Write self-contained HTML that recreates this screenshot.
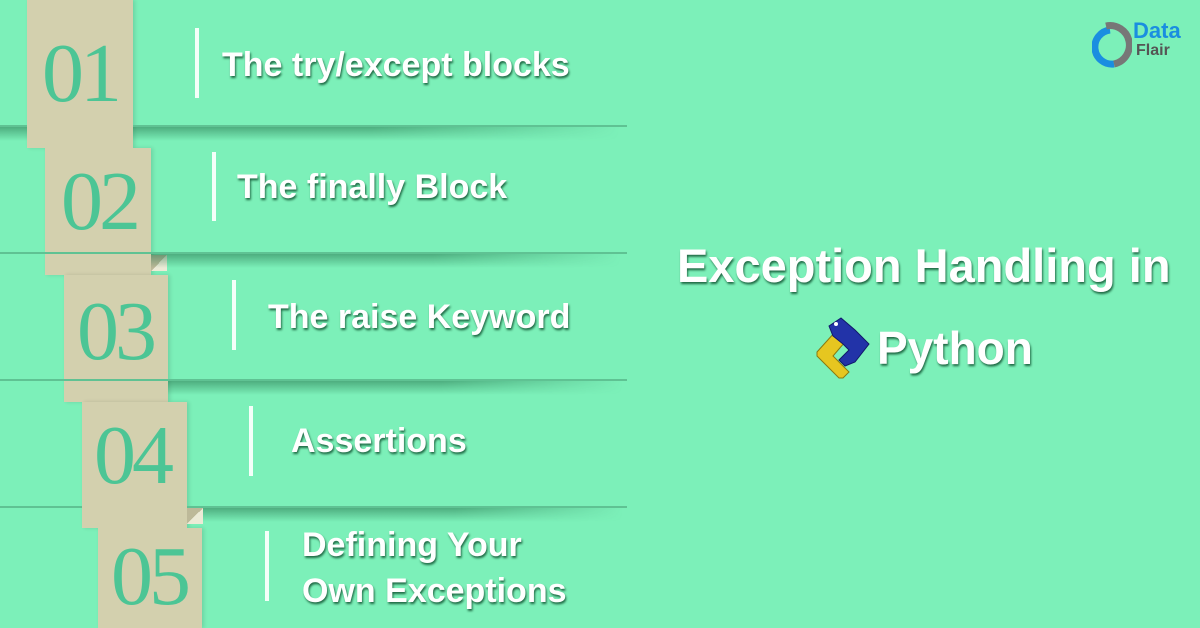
<!DOCTYPE html>
<html><head><style>
body{margin:0;width:1200px;height:628px;background:#7cf0b9;position:relative;overflow:hidden;font-family:"Liberation Sans",sans-serif}
.ln{position:absolute;left:0;width:627px;height:2px;background:#5fc293}
.sh{position:absolute;left:0;width:620px;height:14px;background:linear-gradient(to bottom,rgba(40,120,80,.55),rgba(40,120,80,0));
 -webkit-mask:linear-gradient(to right,#000 60%,transparent);mask:linear-gradient(to right,#000 60%,transparent)}
.tab{position:absolute;background:#d3d0ae;box-shadow:2px 0 4px rgba(0,0,0,.12)}
.num{position:absolute;font-family:"Liberation Serif",serif;color:#4cc595;font-size:84px;letter-spacing:-4px;line-height:1}
.bar{position:absolute;width:4px;background:#f4fff9}
.t{position:absolute;color:#fff;font-weight:bold;font-size:34px;line-height:1.4;text-shadow:1px 2px 2px rgba(0,60,30,.75);white-space:nowrap}
.fold{position:absolute;width:16px;height:16px;background:linear-gradient(135deg,#bdb999 50%,#ecead6 50%)}
</style></head><body>
<div class="tab" style="left:27px;top:0;width:106px;height:148px"></div>
<div class="tab" style="left:45px;top:148px;width:106px;height:127px"></div>
<div class="tab" style="left:64px;top:275px;width:104px;height:127px"></div>
<div class="tab" style="left:82px;top:402px;width:105px;height:126px"></div>
<div class="tab" style="left:98px;top:528px;width:104px;height:100px"></div>
<div class="fold" style="left:151px;top:255px"></div>
<div class="fold" style="left:187px;top:508px"></div>

<div class="ln" style="top:125px;left:0"></div><div class="sh" style="top:127px"></div>
<div class="ln" style="top:252px"></div><div class="sh" style="top:254px;left:151px;width:470px"></div>
<div class="ln" style="top:379px"></div><div class="sh" style="top:381px;left:168px;width:455px"></div>
<div class="ln" style="top:506px"></div><div class="sh" style="top:508px;left:203px;width:420px"></div>
<div class="tab" style="left:27px;top:0;width:106px;height:148px;box-shadow:none"></div>
<div class="tab" style="left:82px;top:402px;width:105px;height:126px;box-shadow:none"></div>

<div class="num" style="left:42px;top:32px">01</div>
<div class="num" style="left:61px;top:160px">02</div>
<div class="num" style="left:77px;top:290px">03</div>
<div class="num" style="left:94px;top:414px">04</div>
<div class="num" style="left:111px;top:535px">05</div>

<div class="bar" style="left:195px;top:28px;height:70px"></div>
<div class="bar" style="left:212px;top:152px;height:69px"></div>
<div class="bar" style="left:232px;top:280px;height:70px"></div>
<div class="bar" style="left:249px;top:406px;height:70px"></div>
<div class="bar" style="left:265px;top:531px;height:70px"></div>

<div class="t" style="left:222px;top:42px">The try/except blocks</div>
<div class="t" style="left:237px;top:164px">The finally Block</div>
<div class="t" style="left:268px;top:294px">The raise Keyword</div>
<div class="t" style="left:291px;top:418px">Assertions</div>
<div class="t" style="left:302px;top:522px;line-height:46px">Defining Your<br>Own Exceptions</div>

<div class="t" style="left:677px;top:233px;font-size:47px">Exception Handling in</div>
<div class="t" style="left:877px;top:316px;font-size:46px">Python</div>
<svg style="position:absolute;left:815px;top:316px" width="58" height="64" viewBox="0 0 58 64">
<polygon points="2,36 20,16 30,26 18,40 34,56 28,62 24,62 2,40" fill="#e6c620" stroke="#8a7a10" stroke-width="1"/>
<polygon points="14,10 26,2 40,14 54,28 40,46 30,50 24,44 34,34 28,28 18,20" fill="#2233a8" stroke="#10186a" stroke-width="1"/>
<circle cx="21" cy="8" r="2" fill="#fff"/>
</svg>
<svg style="position:absolute;left:1092px;top:20px" width="40" height="50" viewBox="0 0 40 50">
<path d="M18 10 A16 16 0 1 0 22 44" fill="none" stroke="#1a8ee0" stroke-width="7"/>
<path d="M14 6 A16 16 0 0 1 22 44" fill="none" stroke="#777" stroke-width="7"/>
</svg>
<div style="position:absolute;left:1133px;top:18px;color:#1a8ee0;font-weight:bold;font-size:22px">Data</div>
<div style="position:absolute;left:1136px;top:42px;color:#555;font-weight:bold;font-size:16px">Flair</div>
</body></html>
